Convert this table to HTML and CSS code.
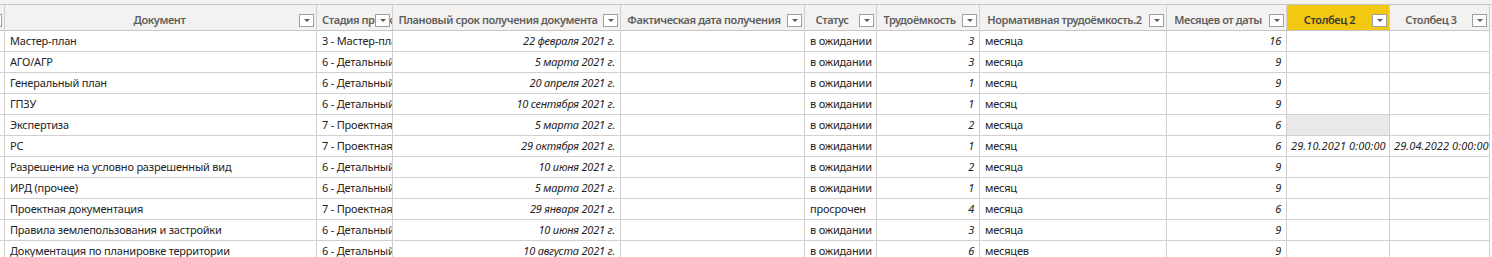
FILE: index.html
```html
<!DOCTYPE html>
<html lang="ru">
<head>
<meta charset="utf-8">
<title>Таблица документов</title>
<link rel="stylesheet" href="styles.css">
</head>
<body>
<div class="topband"></div>
<div class="grid">
  <div class="row head">
    <div class="hc stub"><span class="filter"></span></div>
    <div class="hc wide"><span class="ht">Документ</span><span class="filter"></span></div>
    <div class="hc clip"><span class="ht">Стадия проекта</span><span class="filter"></span></div>
    <div class="hc"><span class="ht">Плановый срок получения документа</span><span class="filter"></span></div>
    <div class="hc"><span class="ht">Фактическая дата получения</span><span class="filter"></span></div>
    <div class="hc"><span class="ht">Статус</span><span class="filter"></span></div>
    <div class="hc"><span class="ht">Трудоёмкость</span><span class="filter"></span></div>
    <div class="hc"><span class="ht">Нормативная трудоёмкость.2</span><span class="filter"></span></div>
    <div class="hc"><span class="ht">Месяцев от даты</span><span class="filter"></span></div>
    <div class="hc active"><span class="ht">Столбец 2</span><span class="filter"></span></div>
    <div class="hc"><span class="ht">Столбец 3</span><span class="filter"></span></div>
  </div>

  <div class="row">
    <div class="c stub"></div>
    <div class="c">Мастер-план</div>
    <div class="c">3 - Мастер-план</div>
    <div class="c num">22 февраля 2021 г.</div>
    <div class="c"></div>
    <div class="c">в ожидании</div>
    <div class="c num">3</div>
    <div class="c">месяца</div>
    <div class="c num">16</div>
    <div class="c"></div>
    <div class="c"></div>
  </div>
  <div class="row">
    <div class="c stub"></div>
    <div class="c">АГО/АГР</div>
    <div class="c">6 - Детальный план</div>
    <div class="c num">5 марта 2021 г.</div>
    <div class="c"></div>
    <div class="c">в ожидании</div>
    <div class="c num">3</div>
    <div class="c">месяца</div>
    <div class="c num">9</div>
    <div class="c"></div>
    <div class="c"></div>
  </div>
  <div class="row">
    <div class="c stub"></div>
    <div class="c">Генеральный план</div>
    <div class="c">6 - Детальный план</div>
    <div class="c num">20 апреля 2021 г.</div>
    <div class="c"></div>
    <div class="c">в ожидании</div>
    <div class="c num">1</div>
    <div class="c">месяц</div>
    <div class="c num">9</div>
    <div class="c"></div>
    <div class="c"></div>
  </div>
  <div class="row">
    <div class="c stub"></div>
    <div class="c">ГПЗУ</div>
    <div class="c">6 - Детальный план</div>
    <div class="c num">10 сентября 2021 г.</div>
    <div class="c"></div>
    <div class="c">в ожидании</div>
    <div class="c num">1</div>
    <div class="c">месяц</div>
    <div class="c num">9</div>
    <div class="c"></div>
    <div class="c"></div>
  </div>
  <div class="row">
    <div class="c stub"></div>
    <div class="c">Экспертиза</div>
    <div class="c">7 - Проектная документация</div>
    <div class="c num">5 марта 2021 г.</div>
    <div class="c"></div>
    <div class="c">в ожидании</div>
    <div class="c num">2</div>
    <div class="c">месяца</div>
    <div class="c num">6</div>
    <div class="c selected"></div>
    <div class="c"></div>
  </div>
  <div class="row">
    <div class="c stub"></div>
    <div class="c">РС</div>
    <div class="c">7 - Проектная документация</div>
    <div class="c num">29 октября 2021 г.</div>
    <div class="c"></div>
    <div class="c">в ожидании</div>
    <div class="c num">1</div>
    <div class="c">месяц</div>
    <div class="c num">6</div>
    <div class="c date">29.10.2021 0:00:00</div>
    <div class="c date">29.04.2022 0:00:00</div>
  </div>
  <div class="row">
    <div class="c stub"></div>
    <div class="c">Разрешение на условно разрешенный вид</div>
    <div class="c">6 - Детальный план</div>
    <div class="c num">10 июня 2021 г.</div>
    <div class="c"></div>
    <div class="c">в ожидании</div>
    <div class="c num">2</div>
    <div class="c">месяца</div>
    <div class="c num">9</div>
    <div class="c"></div>
    <div class="c"></div>
  </div>
  <div class="row">
    <div class="c stub"></div>
    <div class="c">ИРД (прочее)</div>
    <div class="c">6 - Детальный план</div>
    <div class="c num">5 марта 2021 г.</div>
    <div class="c"></div>
    <div class="c">в ожидании</div>
    <div class="c num">1</div>
    <div class="c">месяц</div>
    <div class="c num">9</div>
    <div class="c"></div>
    <div class="c"></div>
  </div>
  <div class="row">
    <div class="c stub"></div>
    <div class="c">Проектная документация</div>
    <div class="c">7 - Проектная документация</div>
    <div class="c num">29 января 2021 г.</div>
    <div class="c"></div>
    <div class="c">просрочен</div>
    <div class="c num">4</div>
    <div class="c">месяца</div>
    <div class="c num">6</div>
    <div class="c"></div>
    <div class="c"></div>
  </div>
  <div class="row">
    <div class="c stub"></div>
    <div class="c">Правила землепользования и застройки</div>
    <div class="c">6 - Детальный план</div>
    <div class="c num">10 июня 2021 г.</div>
    <div class="c"></div>
    <div class="c">в ожидании</div>
    <div class="c num">3</div>
    <div class="c">месяца</div>
    <div class="c num">9</div>
    <div class="c"></div>
    <div class="c"></div>
  </div>
  <div class="row">
    <div class="c stub"></div>
    <div class="c">Документация по планировке территории</div>
    <div class="c">6 - Детальный план</div>
    <div class="c num">10 августа 2021 г.</div>
    <div class="c"></div>
    <div class="c">в ожидании</div>
    <div class="c num">6</div>
    <div class="c">месяцев</div>
    <div class="c num">9</div>
    <div class="c"></div>
    <div class="c"></div>
  </div>
</div>
</body>
</html>
```

FILE: styles.css
```css
* { box-sizing: border-box; }

html, body {
  margin: 0;
  padding: 0;
  background: #ffffff;
  overflow: hidden;
}

body {
  font-family: "Noto Sans", "Open Sans", sans-serif;
  font-size: 11px;
  letter-spacing: -0.2px;
  color: #252423;
}

.topband {
  height: 4px;
  background: #f3f2f1;
}

.grid {
  display: flex;
  flex-direction: column;
}

.row {
  display: grid;
  grid-template-columns: 5px 312px 76px 228px 184px 72px 103px 187px 120px 103px 100px;
  height: 21px;
}

.row.head {
  height: 27px;
  background: #f3f2f1;
  border-top: 1px solid #c8c6c4;
}

.c, .hc {
  border-right: 1px solid #d2d0ce;
  border-bottom: 1px solid #d2d0ce;
  overflow: hidden;
  white-space: nowrap;
  min-width: 0;
}

.c {
  padding: 0 5px;
  line-height: 20px;
}

.c.stub, .hc.stub {
  padding: 0;
}

.c.num, .c.date {
  font-style: italic;
}

.c.num {
  text-align: right;
}

.c.date {
  padding: 0 4px 0 4px;
  letter-spacing: 0.1px;
}

.c.selected {
  background: #ebe9e8;
}

.hc {
  position: relative;
  display: flex;
  align-items: center;
  justify-content: center;
  padding: 4px 22px 0 5px;
  border-bottom-color: #c8c6c4;
  color: #605e5c;
  font-weight: 600;
  letter-spacing: -0.4px;
}

.hc.wide {
  padding-left: 20px;
}

.hc.clip {
  justify-content: flex-start;
  padding-right: 0;
}

.hc.active {
  background: #f2c811;
  color: #3b3a39;
}

.ht {
  white-space: nowrap;
}

.filter {
  position: absolute;
  right: 2px;
  top: 9px;
  width: 15px;
  height: 13px;
  background: #ffffff;
  border: 1px solid #a19f9d;
}

.filter::after {
  content: "";
  position: absolute;
  left: 4px;
  top: 4px;
  border-left: 3px solid transparent;
  border-right: 3px solid transparent;
  border-top: 3px solid #605e5c;
}
```
